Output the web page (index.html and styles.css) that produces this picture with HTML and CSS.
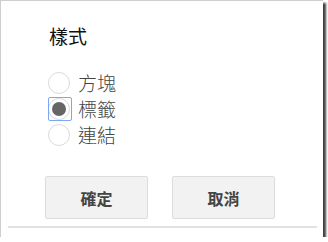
FILE: index.html
```html
<!DOCTYPE html>
<html lang="zh-Hant">
<head>
<meta charset="utf-8">
<title>樣式</title>
<link rel="stylesheet" href="styles.css">
</head>
<body>
<div class="dialog">
  <div class="title">樣式</div>
  <div class="options">
    <div class="option"><span class="radio"></span><span class="label">方塊</span></div>
    <div class="option"><span class="radio checked"></span><span class="label">標籤</span></div>
    <div class="option"><span class="radio"></span><span class="label">連結</span></div>
  </div>
  <div class="buttons">
    <button class="btn">確定</button>
    <button class="btn">取消</button>
  </div>
  <div class="rule"></div>
</div>
</body>
</html>
```
FILE: styles.css
```css
html, body {
  margin: 0;
  padding: 0;
  background: #ffffff;
}
body {
  font-family: "Noto Sans CJK TC", "Noto Sans", sans-serif;
}
.dialog {
  box-sizing: border-box;
  width: 323px;
  height: 237px;
  background: #ffffff;
  border-top: 1px solid #cfcfcf;
  border-left: 1px solid #cfcfcf;
  box-shadow: 3px 3px 2px rgba(0, 0, 0, 0.75);
  padding: 23px 0 0 0;
  display: flex;
  flex-direction: column;
}
.title {
  margin-left: 48px;
  font-size: 19px;
  line-height: 24px;
  color: #111111;
  font-weight: 400;
}
.options {
  margin-top: 22px;
  margin-left: 47px;
  display: flex;
  flex-direction: column;
}
.option {
  height: 26px;
  display: flex;
  align-items: center;
  gap: 8px;
}
.radio {
  position: relative;
  box-sizing: border-box;
  width: 22px;
  height: 22px;
  border: 1px solid #dadada;
  border-radius: 50%;
  flex: none;
}
.radio.checked::before {
  content: "";
  position: absolute;
  left: -1px;
  top: -2px;
  width: 22px;
  height: 22px;
  border: 1px solid #7ba7f4;
  border-radius: 2px;
}
.radio.checked::after {
  content: "";
  position: absolute;
  left: 3px;
  top: 3px;
  width: 14px;
  height: 14px;
  border-radius: 50%;
  background: #666666;
}
.label {
  font-size: 19px;
  line-height: 26px;
  color: #444444;
  font-weight: 300;
}
.buttons {
  margin-top: 28px;
  margin-left: 44px;
  display: flex;
  gap: 24px;
}
.btn {
  box-sizing: border-box;
  width: 103px;
  height: 43px;
  background: #f2f2f2;
  border: 1px solid #dcdcdc;
  border-radius: 2px;
  font-family: "Noto Sans CJK TC", "Noto Sans", sans-serif;
  font-size: 16px;
  font-weight: 700;
  color: #444444;
  padding: 0;
}
.rule {
  margin: 7px 6px 0 7px;
  height: 2px;
  background: #e2e2e2;
}
```
